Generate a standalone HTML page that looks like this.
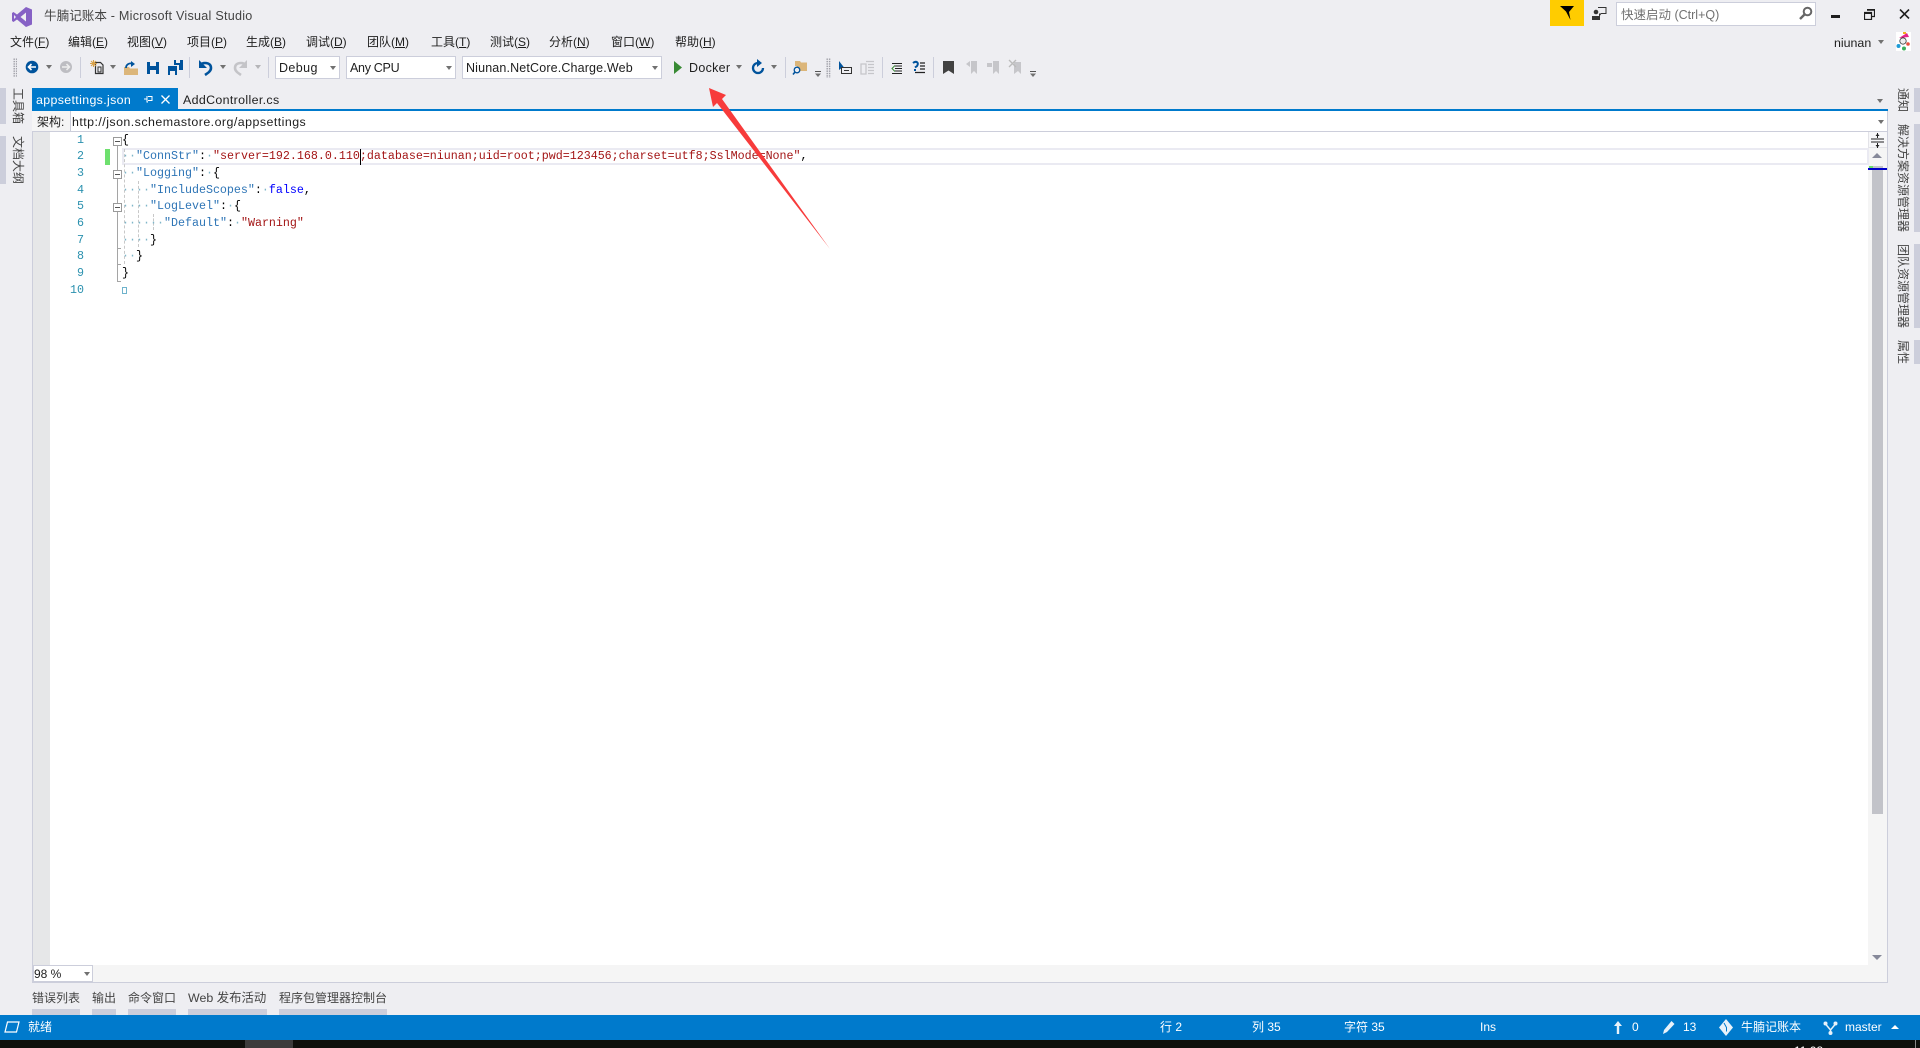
<!DOCTYPE html>
<html><head><meta charset="utf-8"><title>牛腩记账本 - Microsoft Visual Studio</title>
<style>
html,body{margin:0;padding:0;width:1920px;height:1048px;overflow:hidden;background:#eeeef2;font-family:"Liberation Sans","Noto Sans CJK SC",sans-serif;font-size:12px;color:#1e1e1e}
.a{position:absolute}
.t{position:absolute;white-space:nowrap;line-height:16px;height:16px}
.m{top:34px;color:#1e1e1e}
.combo{position:absolute;top:56px;height:21px;background:#fff;border:1px solid #cccedb;line-height:22px;padding-left:3px;font-size:12.5px;box-sizing:content-box;white-space:nowrap}
.car{position:absolute;width:0;height:0;border-left:3.5px solid transparent;border-right:3.5px solid transparent;border-top:4px solid #717171}
.sep{position:absolute;top:57px;width:1px;height:21px;background:#cccedb}
.v{position:absolute;writing-mode:vertical-rl;text-orientation:sideways;font-size:12px;line-height:12px;white-space:nowrap;color:#444}
.strip{position:absolute;background:#cccedb}
.ln{position:absolute;left:50px;width:34px;text-align:right;color:#2b91af;font:11.67px/16px "Liberation Mono",monospace}
.c{position:absolute;left:122px;white-space:pre;font:11.67px/16px "Liberation Mono",monospace;color:#000}
.k{color:#2e75b6}.s{color:#a31515}.b{color:#0000ff}.d{color:#7fb6c9}
.fb{position:absolute;left:113px;width:7px;height:7px;border:1px solid #9a9a9a;background:#fff;box-sizing:content-box}
.fb:after{content:"";position:absolute;left:1px;top:3px;width:5px;height:1px;background:#555}
.st{position:absolute;top:1019px;color:#fff;line-height:16px;white-space:nowrap}
.bt{position:absolute;top:990px;line-height:16px;color:#444;white-space:nowrap}
.g{position:absolute;top:149px;width:0;border-left:1px dashed #c8c8c8}
</style></head>
<body>
<!-- logo -->
<svg class="a" style="left:12px;top:7px" width="20" height="20" viewBox="0 0 20 20"><path fill="#8661c5" d="M14 0l6 2.500v15L14 20 5 12.500 1.500 15 0 14V6L1.500 5 5 7.500zM14 5.500L8.500 10l5.500 4.500zM2 8v4l2-2z"/></svg>
<div class="t" style="left:44px;top:8px;color:#444;font-size:12.6px"><span>牛腩记账本</span><span style="letter-spacing:.25px"> - Microsoft Visual Studio</span></div>

<div class="t m" style="left:10px">文件(<u>F</u>)</div>
<div class="t m" style="left:68px">编辑(<u>E</u>)</div>
<div class="t m" style="left:127px">视图(<u>V</u>)</div>
<div class="t m" style="left:187px">项目(<u>P</u>)</div>
<div class="t m" style="left:246px">生成(<u>B</u>)</div>
<div class="t m" style="left:306px">调试(<u>D</u>)</div>
<div class="t m" style="left:367px">团队(<u>M</u>)</div>
<div class="t m" style="left:431px">工具(<u>T</u>)</div>
<div class="t m" style="left:490px">测试(<u>S</u>)</div>
<div class="t m" style="left:549px">分析(<u>N</u>)</div>
<div class="t m" style="left:611px">窗口(<u>W</u>)</div>
<div class="t m" style="left:675px">帮助(<u>H</u>)</div>

<!-- top right -->
<div class="a" style="left:1550px;top:0;width:34px;height:26px;background:#ffcc00"></div>
<svg class="a" style="left:1559px;top:6px" width="16" height="14" viewBox="0 0 16 14"><path d="M1 0h14L10 6l1.500 8L7 5.500z" fill="#000"/></svg>
<svg class="a" style="left:1592px;top:6px" width="15" height="15" viewBox="0 0 15 15"><circle cx="4" cy="6" r="2.300" fill="#333"/><path d="M0 14V10h8v4z" fill="#333"/><path d="M6 1.500h8v6H9l-1.500 2V7.500" fill="none" stroke="#333"/></svg>
<div class="a" style="left:1616px;top:2px;width:198px;height:22px;background:#fff;border:1px solid #cccedb"></div>
<div class="t" style="left:1621px;top:7px;color:#717171;font-size:12.5px">快速启动 (Ctrl+Q)</div>
<svg class="a" style="left:1799px;top:6px" width="14" height="14" viewBox="0 0 14 14"><circle cx="8.500" cy="5.500" r="3.800" fill="none" stroke="#666" stroke-width="2"/><path d="M6 8L1 13" stroke="#666" stroke-width="2.400"/></svg>
<div class="a" style="left:1831px;top:15px;width:9px;height:3px;background:#1e1e1e"></div>
<svg class="a" style="left:1864px;top:9px" width="11" height="11" viewBox="0 0 11 11"><path d="M3 .5h7.500v7H8M.5 3.500h7v7h-7z" fill="none" stroke="#1e1e1e" stroke-width="1.200"/><path d="M.5 3h7v2h-7zM3 .2h7.500v1.600H3z" fill="#1e1e1e"/></svg>
<svg class="a" style="left:1899px;top:9px" width="11" height="10" viewBox="0 0 11 10"><path d="M1 .5l9 9M10 .5l-9 9" stroke="#1e1e1e" stroke-width="1.600"/></svg>
<div class="t" style="left:1834px;top:35px;font-size:12.4px">niunan</div>
<div class="car" style="left:1878px;top:40px"></div>
<svg class="a" style="left:1896px;top:32px" width="15" height="19" viewBox="0 0 15 19"><rect width="15" height="19" fill="#fff"/><path d="M3 6L11 1l2 4z" fill="#e6238a"/><rect x="7" y="0" width="3" height="2" fill="#f2b01e"/><circle cx="7" cy="9" r="3.200" fill="#eee" stroke="#333" stroke-width=".8"/><circle cx="2.500" cy="14" r="2" fill="#1e9bd7"/><circle cx="12" cy="12" r="1.800" fill="#e94e3c"/><circle cx="8" cy="16.500" r="2" fill="#3aae5b"/></svg>

<!-- toolbar left -->
<div class="a" style="left:13px;top:58px;width:4px;height:19px;background-image:radial-gradient(#a0a0a8 .7px,transparent .8px);background-size:2.400px 2.400px"></div>
<svg class="a" style="left:0;top:50px;overflow:visible" width="270" height="35" viewBox="0 0 270 35">
<circle cx="32" cy="17" r="6.300" fill="#00539c"/><path d="M36 17h-7M31.500 14l-3 3 3 3" stroke="#fff" stroke-width="1.600" fill="none"/>
<circle cx="66" cy="17" r="6" fill="#bdbdc2"/><path d="M62 17h7M66.500 14l3 3-3 3" stroke="#eee" stroke-width="1.500" fill="none"/>
<path d="M95.500 12.500h5l2.500 2.500v8.500h-7.500z" fill="none" stroke="#333" stroke-width="1.200"/><path d="M98 17h3v5h-3z" fill="none" stroke="#333"/><path d="M93.500 10v7M90 13.500h7M91 11l5 5M96 11l-5 5" stroke="#d9a24a" stroke-width="1.100"/>
<path d="M124 17h5l1 1.500h8V25h-14z" fill="#dcb67a"/><path d="M126 18c0-3.500 3-5 6-4.500" stroke="#00539c" stroke-width="1.800" fill="none"/><path d="M131 11l4 3-4 3z" fill="#00539c"/>
<path d="M147 12h12v12h-12z" fill="#00539c"/><rect x="150" y="12" width="6" height="4" fill="#eeeef2"/><rect x="150" y="20" width="6" height="4" fill="#eeeef2"/>
<path d="M168 16h9v9h-9z" fill="#00539c"/><rect x="170" y="21" width="5" height="4" fill="#eeeef2"/><path d="M174 10h9v10h-4v-5h-5z" fill="#00539c"/><rect x="176" y="10" width="4" height="3" fill="#eeeef2"/>
<path d="M200 15c3-3 11-3 11 3 0 3-3 5-6 7" stroke="#00539c" stroke-width="2.600" fill="none"/><path d="M199 10v8h8z" fill="#00539c"/>
<path d="M246 15c-3-3-11-3-11 3 0 3 3 5 6 7" stroke="#c4c4c8" stroke-width="2.600" fill="none"/><path d="M247 10v8h-8z" fill="#c4c4c8"/>
</svg>
<div class="car" style="left:46px;top:65px"></div>
<div class="car" style="left:110px;top:65px"></div>
<div class="car" style="left:220px;top:65px"></div>
<div class="car" style="left:255px;top:65px;border-top-color:#b5b5b8"></div>
<div class="sep" style="left:80px"></div><div class="sep" style="left:189px"></div><div class="sep" style="left:268px"></div>

<div class="combo" style="left:275px;width:60px;letter-spacing:.4px">Debug<div class="car" style="left:54px;top:9px"></div></div>
<div class="combo" style="left:346px;width:105px;letter-spacing:-.3px">Any CPU<div class="car" style="left:99px;top:9px"></div></div>
<div class="combo" style="left:462px;width:195px;letter-spacing:.15px">Niunan.NetCore.Charge.Web<div class="car" style="left:189px;top:9px"></div></div>

<svg class="a" style="left:673px;top:61px" width="10" height="13" viewBox="0 0 10 13"><path d="M1 0l8 6.500L1 13z" fill="#388a34"/></svg>
<div class="t" style="left:689px;top:60px;font-size:12.5px;letter-spacing:.3px">Docker</div>
<div class="car" style="left:736px;top:65px"></div>
<svg class="a" style="left:751px;top:59px" width="14" height="16" viewBox="0 0 14 16"><path d="M7 4a5 5 0 1 0 5 5" stroke="#00539c" stroke-width="2.300" fill="none"/><path d="M6 0l5 4-5 4z" fill="#00539c"/></svg>
<div class="car" style="left:771px;top:65px"></div>
<div class="sep" style="left:785px"></div><div class="sep" style="left:882px"></div><div class="sep" style="left:933px"></div>

<svg class="a" style="left:780px;top:50px;overflow:visible" width="270" height="35" viewBox="0 0 270 35">
<path d="M15 11h5l1 1.500h6V21H17v-5h-2z" fill="#dcb67a"/><circle cx="17" cy="20" r="2.800" fill="#eeeef2" stroke="#00539c" stroke-width="1.300"/><path d="M15 22L13 24.500" stroke="#00539c" stroke-width="1.600"/>
<path d="M35 21.500h6" stroke="#555"/><path d="M35 23.500l3 3.500 3-3.500z" fill="#717171"/>
<path d="M59 11v9l2.500-2h3z" fill="#00539c"/><path d="M61.500 17.500h10v6h-10z" fill="none" stroke="#333"/><path d="M64 20.500h5" stroke="#333"/>
<path d="M81 14h5v10h-5zM86 11.500h8M88 14.500h6M88 17.500h6M88 20.500h6M88 23.500h6" fill="none" stroke="#c6c6ca" stroke-width="1.300"/>
<path d="M112 13.500h10M115 16h7M115 18.500h7M115 21h7M112 23.500h10" stroke="#222" stroke-width="1.100"/><path d="M115 15.500l-3 3 3 3" fill="none" stroke="#388a34"/>
<path d="M133 13c3-2.500 6.500-.5 4 3l-2 1.500M135 19v2" stroke="#00539c" stroke-width="2" fill="none"/><path d="M140 13h5M140 16h5M140 19h5M135 22.500h10" stroke="#222" stroke-width="1.200"/>
<path d="M163 11h11v13l-5.500-3.500-5.500 3.500z" fill="#424242"/>
<path d="M191 11h6v13l-3-3-3 3zM186 14l4-3v6z" fill="#c6c6ca"/>
<path d="M213 11h6v13l-3-3-3 3zM207 13h5v4h-5z" fill="#c6c6ca"/>
<path d="M234 12h7v12l-3-3-4 3z" fill="#c6c6ca"/><path d="M229 10l7 7M236 10l-7 7" stroke="#bbb" stroke-width="1.400"/>
<path d="M250 21.500h6" stroke="#555"/><path d="M250 23.500l3 3.500 3-3.500z" fill="#717171"/>
</svg>
<div class="a" style="left:826px;top:58px;width:5px;height:20px;background-image:radial-gradient(#a0a0a8 .7px,transparent .8px);background-size:2.400px 2.400px"></div>

<!-- left tool tabs -->
<div class="strip" style="left:0;top:88px;width:6px;height:36px"></div>
<div class="strip" style="left:0;top:136px;width:6px;height:48px"></div>
<div class="v" style="left:12px;top:88px">工具箱</div>
<div class="v" style="left:12px;top:136px">文档大纲</div>

<!-- right tool tabs -->
<div class="strip" style="left:1914px;top:88px;width:6px;height:24px"></div>
<div class="strip" style="left:1914px;top:124px;width:6px;height:108px"></div>
<div class="strip" style="left:1914px;top:244px;width:6px;height:84px"></div>
<div class="strip" style="left:1914px;top:340px;width:6px;height:24px"></div>
<div class="v" style="left:1897px;top:88px">通知</div>
<div class="v" style="left:1897px;top:124px">解决方案资源管理器</div>
<div class="v" style="left:1897px;top:244px">团队资源管理器</div>
<div class="v" style="left:1897px;top:340px">属性</div>

<!-- tabs -->
<div class="a" style="left:32px;top:88px;width:146px;height:21px;background:#007acc"></div>
<div class="t" style="left:36px;top:92px;color:#fff;font-size:12.4px;letter-spacing:.35px">appsettings.json</div>
<svg class="a" style="left:143px;top:94px" width="10" height="10" viewBox="0 0 10 10"><path d="M1 5h3M4 2v6h1M5 2.500h4v4H5" stroke="#fff" fill="none"/></svg>
<svg class="a" style="left:161px;top:95px" width="9" height="9" viewBox="0 0 9 9"><path d="M.5.500l8 8M8.500.500l-8 8" stroke="#fff" stroke-width="1.300"/></svg>
<div class="t" style="left:183px;top:92px;font-size:12.4px;letter-spacing:.35px;color:#1e1e1e">AddController.cs</div>
<div class="car" style="left:1877px;top:99px"></div>
<div class="a" style="left:32px;top:109px;width:1856px;height:2px;background:#007acc"></div>

<!-- schema bar -->
<div class="a" style="left:32px;top:111px;width:1856px;height:20px;background:#f5f5f5"></div>
<div class="a" style="left:70px;top:111px;width:1817px;height:20px;background:#fff;border-left:1px solid #cccedb;box-sizing:border-box"></div>
<div class="a" style="left:32px;top:131px;width:1856px;height:1px;background:#cccedb"></div>
<div class="t" style="left:37px;top:114px">架构:</div>
<div class="t" style="left:72px;top:114px;font-size:12.4px;letter-spacing:.46px">http://json.schemastore.org/appsettings</div>
<div class="car" style="left:1878px;top:120px"></div>

<!-- editor -->
<div class="a" style="left:32px;top:132px;width:1px;height:850px;background:#cccedb"></div>
<div class="a" style="left:33px;top:132px;width:17px;height:833px;background:#e6e7e8"></div>
<div class="a" style="left:50px;top:132px;width:1818px;height:833px;background:#fff"></div>
<div class="a" style="left:1868px;top:132px;width:19px;height:833px;background:#f5f5f5"></div>
<div class="a" style="left:1887px;top:111px;width:1px;height:872px;background:#cccedb"></div>
<div class="a" style="left:33px;top:965px;width:1854px;height:17px;background:#f5f5f5"></div>
<div class="a" style="left:32px;top:982px;width:1856px;height:1px;background:#cccedb"></div>

<!-- current line highlight -->
<div class="a" style="left:122px;top:148px;width:1743px;height:13px;border:2px solid #eaeaf2"></div>

<div class="ln" style="top:132px">1</div><div class="ln" style="top:148px">2</div><div class="ln" style="top:165px">3</div><div class="ln" style="top:182px">4</div><div class="ln" style="top:198px">5</div><div class="ln" style="top:215px">6</div><div class="ln" style="top:232px">7</div><div class="ln" style="top:248px">8</div><div class="ln" style="top:265px">9</div><div class="ln" style="top:282px">10</div>

<div class="a" style="left:105px;top:149px;width:5px;height:16px;background:#6ee06e"></div>

<!-- outlining -->
<div class="a" style="left:117px;top:145px;width:1px;height:136px;background:#a5a5a5"></div>
<div class="a" style="left:117px;top:248px;width:4px;height:1px;background:#a5a5a5"></div>
<div class="a" style="left:117px;top:264px;width:4px;height:1px;background:#a5a5a5"></div>
<div class="a" style="left:117px;top:281px;width:4px;height:1px;background:#a5a5a5"></div>
<div class="fb" style="top:137px"></div><div class="fb" style="top:170px"></div><div class="fb" style="top:203px"></div>
<div class="g" style="left:124px;height:115px"></div>
<div class="g" style="left:138px;top:181px;height:66px"></div>
<div class="g" style="left:153px;top:214px;height:16px"></div>

<div class="c" style="top:132px">{</div>
<div class="c" style="top:148px"><span class="d">··</span><span class="k">"ConnStr"</span>:<span class="d">·</span><span class="s">"server=192.168.0.110;database=niunan;uid=root;pwd=123456;charset=utf8;SslMode=None"</span>,</div>
<div class="c" style="top:165px"><span class="d">··</span><span class="k">"Logging"</span>:<span class="d">·</span>{</div>
<div class="c" style="top:182px"><span class="d">····</span><span class="k">"IncludeScopes"</span>:<span class="d">·</span><span class="b">false</span>,</div>
<div class="c" style="top:198px"><span class="d">····</span><span class="k">"LogLevel"</span>:<span class="d">·</span>{</div>
<div class="c" style="top:215px"><span class="d">······</span><span class="k">"Default"</span>:<span class="d">·</span><span class="s">"Warning"</span></div>
<div class="c" style="top:232px"><span class="d">····</span>}</div>
<div class="c" style="top:248px"><span class="d">··</span>}</div>
<div class="c" style="top:265px">}</div>
<div class="a" style="left:122px;top:287px;width:3px;height:5px;border:1px solid #6fb3cc"></div>
<div class="a" style="left:360px;top:149px;width:1px;height:16px;background:#000"></div>

<!-- scrollbar -->
<div class="a" style="left:1868px;top:132px;width:19px;height:16px;border-left:1px solid #e3e3e8;border-bottom:1px solid #e3e3e8;box-sizing:border-box;background:#f7f7f9"></div>
<svg class="a" style="left:1871px;top:133px" width="14" height="15" viewBox="0 0 14 15"><path d="M0 6h13M0 9h13M6.500 0v5M6.500 10v5" stroke="#222"/><path d="M4.500 3l2-2.500 2 2.500zM4.500 12l2 2.500 2-2.500z" fill="#222"/></svg>
<div class="a" style="left:1872px;top:153px;border-left:5px solid transparent;border-right:5px solid transparent;border-bottom:5px solid #868999"></div>
<div class="a" style="left:1872px;top:166px;width:11px;height:648px;background:#c2c3c9"></div>
<div class="a" style="left:1869px;top:166px;width:4px;height:3px;background:#6ee06e"></div>
<div class="a" style="left:1868px;top:168px;width:19px;height:2px;background:#0000c8"></div>
<div class="a" style="left:1872px;top:955px;border-left:5px solid transparent;border-right:5px solid transparent;border-top:5px solid #868999"></div>

<!-- zoom combo -->
<div class="a" style="left:33px;top:965px;width:58px;height:15px;background:#fff;border:1px solid #cccedb;line-height:17px;font-size:12px;color:#1e1e1e">98 %<div class="car" style="left:50px;top:6px"></div></div>

<!-- bottom tabs -->
<div class="bt" style="left:32px">错误列表</div>
<div class="bt" style="left:92px">输出</div>
<div class="bt" style="left:128px">命令窗口</div>
<div class="bt" style="left:188px;font-size:12.4px">Web 发布活动</div>
<div class="bt" style="left:279px">程序包管理器控制台</div>
<div class="strip" style="left:32px;top:1009px;width:48px;height:6px"></div>
<div class="strip" style="left:92px;top:1009px;width:24px;height:6px"></div>
<div class="strip" style="left:128px;top:1009px;width:48px;height:6px"></div>
<div class="strip" style="left:188px;top:1009px;width:79px;height:6px"></div>
<div class="strip" style="left:279px;top:1009px;width:108px;height:6px"></div>

<!-- status bar -->
<div class="a" style="left:0;top:1015px;width:1920px;height:25px;background:#007acc"></div>
<svg class="a" style="left:4px;top:1021px" width="16" height="12" viewBox="0 0 16 12"><path d="M3.500 1H15l-2.500 10H1z" fill="none" stroke="#fff" stroke-width="1.200"/></svg>
<div class="st" style="left:28px">就绪</div>
<div class="st" style="left:1160px">行 2</div>
<div class="st" style="left:1252px">列 35</div>
<div class="st" style="left:1344px">字符 35</div>
<div class="st" style="left:1480px">Ins</div>
<svg class="a" style="left:1613px;top:1021px" width="10" height="13" viewBox="0 0 10 13"><path d="M5 0l4 5H6.200v8H3.800V5H1z" fill="#e8f2fa"/></svg>
<div class="st" style="left:1632px">0</div>
<svg class="a" style="left:1663px;top:1021px" width="12" height="13" viewBox="0 0 12 13"><path d="M8.500 0l3 3-7.500 8L0 13l1-4z" fill="#e8f2fa"/></svg>
<div class="st" style="left:1683px">13</div>
<svg class="a" style="left:1719px;top:1019px" width="14" height="17" viewBox="0 0 14 17"><path d="M7 0l7 8.500-7 8.500-7-8.500z" fill="#e8f2fa"/><path d="M5 4l2.500 4.500v4" stroke="#007acc" fill="none"/></svg>
<div class="st" style="left:1741px">牛腩记账本</div>
<svg class="a" style="left:1823px;top:1021px" width="15" height="14" viewBox="0 0 15 14"><circle cx="2.500" cy="2.500" r="2" fill="#e8f2fa"/><circle cx="12.500" cy="2.500" r="2" fill="#e8f2fa"/><circle cx="7.500" cy="12" r="2" fill="#e8f2fa"/><path d="M2.500 3L7.500 9l5-6M7.500 9v3" stroke="#e8f2fa" stroke-width="1.500" fill="none"/></svg>
<div class="st" style="left:1845px">master</div>
<div class="a" style="left:1891px;top:1025px;border-left:4px solid transparent;border-right:4px solid transparent;border-bottom:4px solid #fff"></div>

<!-- taskbar -->
<div class="a" style="left:0;top:1040px;width:1920px;height:8px;background:#0e100c;overflow:hidden">
<div class="a" style="left:245px;top:0;width:48px;height:8px;background:#3c3c3c"></div>
<div class="t" style="left:1794px;top:3px;color:#fff;font-size:12px">11:08</div>
<div class="a" style="left:1915px;top:0;width:1px;height:8px;background:#888"></div>
</div>

<!-- red annotation arrow -->
<svg class="a" style="left:0;top:0;pointer-events:none" width="1920" height="1048" viewBox="0 0 1920 1048"><path d="M709 88L726 95 722 99 830 249 717 103 713 107z" fill="#f73b3b"/></svg>
</body></html>
